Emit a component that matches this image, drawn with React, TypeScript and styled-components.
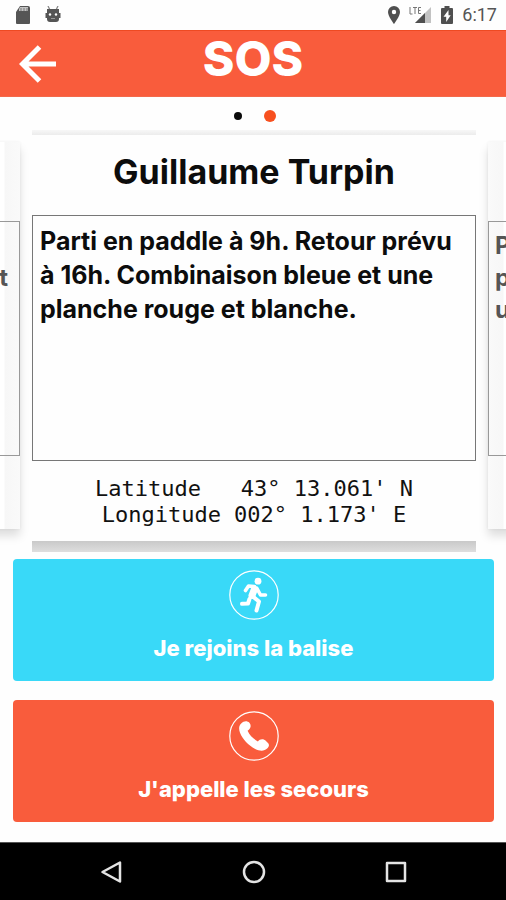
import React from 'react';
import styled, { createGlobalStyle, css } from 'styled-components';

const orange = '#f95c3c';
const cyan = '#39d9f8';

const GlobalStyle = createGlobalStyle`
  *, *::before, *::after { box-sizing: border-box; }
  body { margin: 0; background: #fefefe; color: #0c0c0c; font-family: Inter, sans-serif; }
  button { font: inherit; color: inherit; border: 0; padding: 0; background: none; cursor: pointer; }
`;

const Screen = styled.div`
  display: flex;
  flex-direction: column;
  min-height: 100vh;
  overflow: hidden;
`;

const StatusBar = styled.div`
  display: flex;
  align-items: center;
  justify-content: space-between;
  height: 30px;
  padding: 0 9px 0 15px;
  color: #555;
  font: 400 18px/30px Roboto, sans-serif;
`;

const StatusGroup = styled.div<{ $gap: number }>`
  display: flex;
  align-items: center;
  gap: ${(p) => p.$gap}px;
  svg { display: block; }
`;

const Header = styled.header`
  display: grid;
  grid-template-columns: 60px 1fr 60px;
  height: 67px;
  background: ${orange};
  color: #fff;
  border-top: 1px solid #ee4a22;
  border-bottom: 1px solid #f3694b;
`;

const BackButton = styled.button`
  display: flex;
  align-items: center;
  justify-content: flex-end;
  padding-right: 3px;
`;

const Title = styled.h1`
  margin: 0;
  font-size: 48px;
  font-weight: 800;
  line-height: 56px;
  text-align: center;
`;

const Dots = styled.nav`
  display: flex;
  align-items: center;
  justify-content: center;
  gap: 22px;
  height: 33px;
  padding: 5px 0 0 4px;
`;

const Dot = styled.button<{ $active?: boolean }>`
  width: ${(p) => (p.$active ? 12 : 8)}px;
  height: ${(p) => (p.$active ? 12 : 8)}px;
  border-radius: 50%;
  background: ${(p) => (p.$active ? '#f7501f' : '#0a0a0a')};
`;

const Carousel = styled.section`
  display: flex;
  align-items: flex-start;
  justify-content: center;
  gap: 12px;
  padding-left: 2px;
`;

const cardBase = css`
  flex: none;
  display: flex;
  flex-direction: column;
`;

const Card = styled.article`
  ${cardBase}
  width: calc(100% - 60px);
  &::before {
    content: '';
    height: 5px;
    background: linear-gradient(#f7f7f7, #ececec);
  }
  &::after {
    content: '';
    height: 11px;
    background: linear-gradient(#c9c9c9, #dedede);
  }
`;

const Name = styled.h2`
  margin: 0;
  height: 80px;
  font-size: 34px;
  font-weight: 700;
  line-height: 74px;
  text-align: center;
  white-space: nowrap;
`;

const Message = styled.p`
  margin: 0;
  height: 246px;
  padding: 8px 7px;
  border: 1px solid #777;
  font-size: 25px;
  font-weight: 700;
  line-height: 34px;
  white-space: pre;
`;

const Position = styled.p`
  margin: 0;
  height: 80px;
  padding-top: 15px;
  color: #111;
  font: 22px/26px 'DejaVu Sans Mono', monospace;
  text-align: center;
  white-space: pre;
`;

const SideCard = styled.article<{ $side: 'left' | 'right' }>`
  ${cardBase}
  width: calc(100% - 82px);
  height: 387px;
  margin-top: 12px;
  padding-top: 79px;
  color: #555;
  background: linear-gradient(
    to ${(p) => (p.$side === 'left' ? 'right' : 'left')},
    #fff calc(100% - 16px),
    #f7f7f7 calc(100% - 15px),
    #fafafa
  );
  box-shadow: 0 7px 9px rgba(0, 0, 0, 0.13), 0 0 3px rgba(0, 0, 0, 0.06);
`;

const SideMessage = styled.p<{ $side: 'left' | 'right' }>`
  margin: 0;
  height: 235px;
  padding: ${(p) => (p.$side === 'left' ? '8px 11px' : '8px 6px')};
  border: 1px solid #999;
  font-size: 24px;
  font-weight: 700;
  line-height: 32px;
  text-align: ${(p) => (p.$side === 'left' ? 'right' : 'left')};
  white-space: pre;
`;

const Actions = styled.div`
  flex: 1;
  display: flex;
  flex-direction: column;
  gap: 19px;
  padding: 7px 12px 20px 13px;
`;

const Action = styled.button<{ $color: string }>`
  && {
    display: flex;
    flex-direction: column;
    align-items: center;
    height: 122px;
    padding-top: 11px;
    gap: 12px;
    border-radius: 4px;
    background: ${(p) => p.$color};
    color: #fff;
    font-size: 22px;
    font-weight: 800;
    line-height: 32px;
    white-space: nowrap;
  }
`;

const NavBar = styled.nav`
  display: flex;
  align-items: center;
  justify-content: center;
  gap: 118px;
  height: 58px;
  padding-left: 2px;
  border-top: 1px solid #555;
  background: #000;
  svg { display: block; }
`;

const SdCard = () => (
  <svg width="16" height="18" viewBox="0 0 16 18">
    <path d="M5 0h8a2 2 0 0 1 2 2v15a1 1 0 0 1-1 1H2a1 1 0 0 1-1-1V6z" fill="#555" />
    <path d="M5 1h8v4H4V3z" fill="#c4c4c4" />
    <path d="M6 2v3M9 2v3M12 2v3" stroke="#777" />
  </svg>
);

const Android = () => (
  <svg width="16" height="18" viewBox="0 0 16 18">
    <path d="M3 0l2 4M13 0l-2 4" stroke="#888" strokeWidth="1.3" />
    <path d="M2 3h12v4h1.500v5H14v1a3 3 0 0 1-3 3H5a3 3 0 0 1-3-3v-1H.5V7H2z" fill="#555" />
    <circle cx="5" cy="8.500" r="1.200" fill="#fff" />
    <circle cx="11" cy="8.500" r="1.200" fill="#fff" />
    <path d="M6 12.500h4" stroke="#999" />
  </svg>
);

const Pin = () => (
  <svg width="12" height="18" viewBox="0 0 12 18">
    <path d="M6 0a6 6 0 0 0-6 6c0 4.300 6 12 6 12s6-7.700 6-12a6 6 0 0 0-6-6zm0 3.800a2.200 2.200 0 1 1 0 4.400 2.200 2.200 0 0 1 0-4.400z" fill="#4f4f4f" />
  </svg>
);

const Signal = () => (
  <svg width="23" height="18" viewBox="0 0 23 18">
    <path d="M22 1v16H6z" fill="#c2c2c2" />
    <path d="M16 7v10H6z" fill="#4f4f4f" />
    <path d="M0 0h13v8H0z" fill="#fefefe" />
    <path d="M1 1v7h2.500M4 1.500h4M6 1.500V8M12 1.500H9.500v6H12M9.500 4.500h2" fill="none" stroke="#777" />
  </svg>
);

const Battery = () => (
  <svg width="12" height="18" viewBox="0 0 12 18">
    <path d="M3.500 0h5v2H11a1 1 0 0 1 1 1v14a1 1 0 0 1-1 1H1a1 1 0 0 1-1-1V3a1 1 0 0 1 1-1h2.500z" fill="#4f4f4f" />
    <path d="M7.500 4L2.500 10.800h2.700V16l4.500-6.800H7.500z" fill="#fff" />
  </svg>
);

const BackArrow = () => (
  <svg width="38" height="38" viewBox="0 0 38 38" fill="none" stroke="#fff" strokeWidth="5">
    <path d="M20.500 2L3.500 19l17 17M4 19h33" />
  </svg>
);

const Runner = () => (
  <svg width="50" height="50" viewBox="0 0 50 50" fill="none" stroke="#fff" strokeLinecap="round" strokeLinejoin="round">
    <circle cx="25" cy="25" r="24.200" strokeWidth="1.200" />
    <circle cx="29" cy="11.200" r="3.400" fill="#fff" stroke="none" />
    <path d="M16.500 20.500l3-4.500 6 .5" strokeWidth="3.600" />
    <path d="M25.500 19l-2.500 6.500" strokeWidth="7" />
    <path d="M28 18.500l3.500 6.500h5" strokeWidth="3.600" />
    <path d="M24.500 27l5.500 4.500-2.500 9" strokeWidth="4" />
    <path d="M20.500 29l-1.500 4.500-6 .3" strokeWidth="4" />
  </svg>
);

const Phone = () => (
  <svg width="50" height="50" viewBox="0 0 50 50" fill="none" stroke="#fff">
    <circle cx="25" cy="25" r="24.200" strokeWidth="1.200" />
    <path
      d="M12.200 12.500c2.500-2.800 6-3 8.200-.8 2.300 2.700 1.300 6-1.800 8 2.300 4.800 5.600 8 10.300 10.800 2-2.600 5.600-3 8.300-.3l1.800 1.900c1.600 1.700 1 3.500-.6 5.200-3 3-7.600 3-12.200.6-6.800-3.600-12.600-9.600-15.200-16.200-1.400-3.800-1.200-6.800 1.200-9.200z"
      fill="#fff"
      stroke="none"
    />
  </svg>
);

const NavIcon = ({ children }: { children: React.ReactNode }) => (
  <svg width="24" height="24" viewBox="0 0 24 24" fill="none" stroke="#e4e4e4" strokeWidth="2.500" strokeLinejoin="round">
    {children}
  </svg>
);

export default function App() {
  return (
    <Screen>
      <GlobalStyle />
      <StatusBar>
        <StatusGroup $gap={14}>
          <SdCard />
          <Android />
        </StatusGroup>
        <StatusGroup $gap={9}>
          <Pin />
          <Signal />
          <Battery />
          <span>6:17</span>
        </StatusGroup>
      </StatusBar>

      <Header>
        <BackButton aria-label="Retour">
          <BackArrow />
        </BackButton>
        <Title>SOS</Title>
      </Header>

      <Dots aria-label="Fiches">
        <Dot aria-label="Fiche 1" />
        <Dot $active aria-label="Fiche 2" aria-current="true" />
      </Dots>

      <Carousel>
        <SideCard $side="left">
          <SideMessage $side="left">{'\net'}</SideMessage>
        </SideCard>
        <Card>
          <Name>Guillaume Turpin</Name>
          <Message>
            {'Parti en paddle à 9h. Retour prévu\nà 16h. Combinaison bleue et une\nplanche rouge et blanche.'}
          </Message>
          <Position>{"Latitude   43° 13.061' N\nLongitude 002° 1.173' E"}</Position>
        </Card>
        <SideCard $side="right">
          <SideMessage $side="right">{'Parti\nplanche\nune'}</SideMessage>
        </SideCard>
      </Carousel>

      <Actions>
        <Action $color={cyan}>
          <Runner />
          <span>Je rejoins la balise</span>
        </Action>
        <Action $color={orange}>
          <Phone />
          <span>J'appelle les secours</span>
        </Action>
      </Actions>

      <NavBar aria-label="Navigation">
        <button aria-label="Précédent">
          <NavIcon><path d="M20 2.500v19L2.500 12z" /></NavIcon>
        </button>
        <button aria-label="Accueil">
          <NavIcon><circle cx="12" cy="12" r="10" /></NavIcon>
        </button>
        <button aria-label="Applications">
          <NavIcon><rect x="3" y="3" width="18" height="18" /></NavIcon>
        </button>
      </NavBar>
    </Screen>
  );
}
